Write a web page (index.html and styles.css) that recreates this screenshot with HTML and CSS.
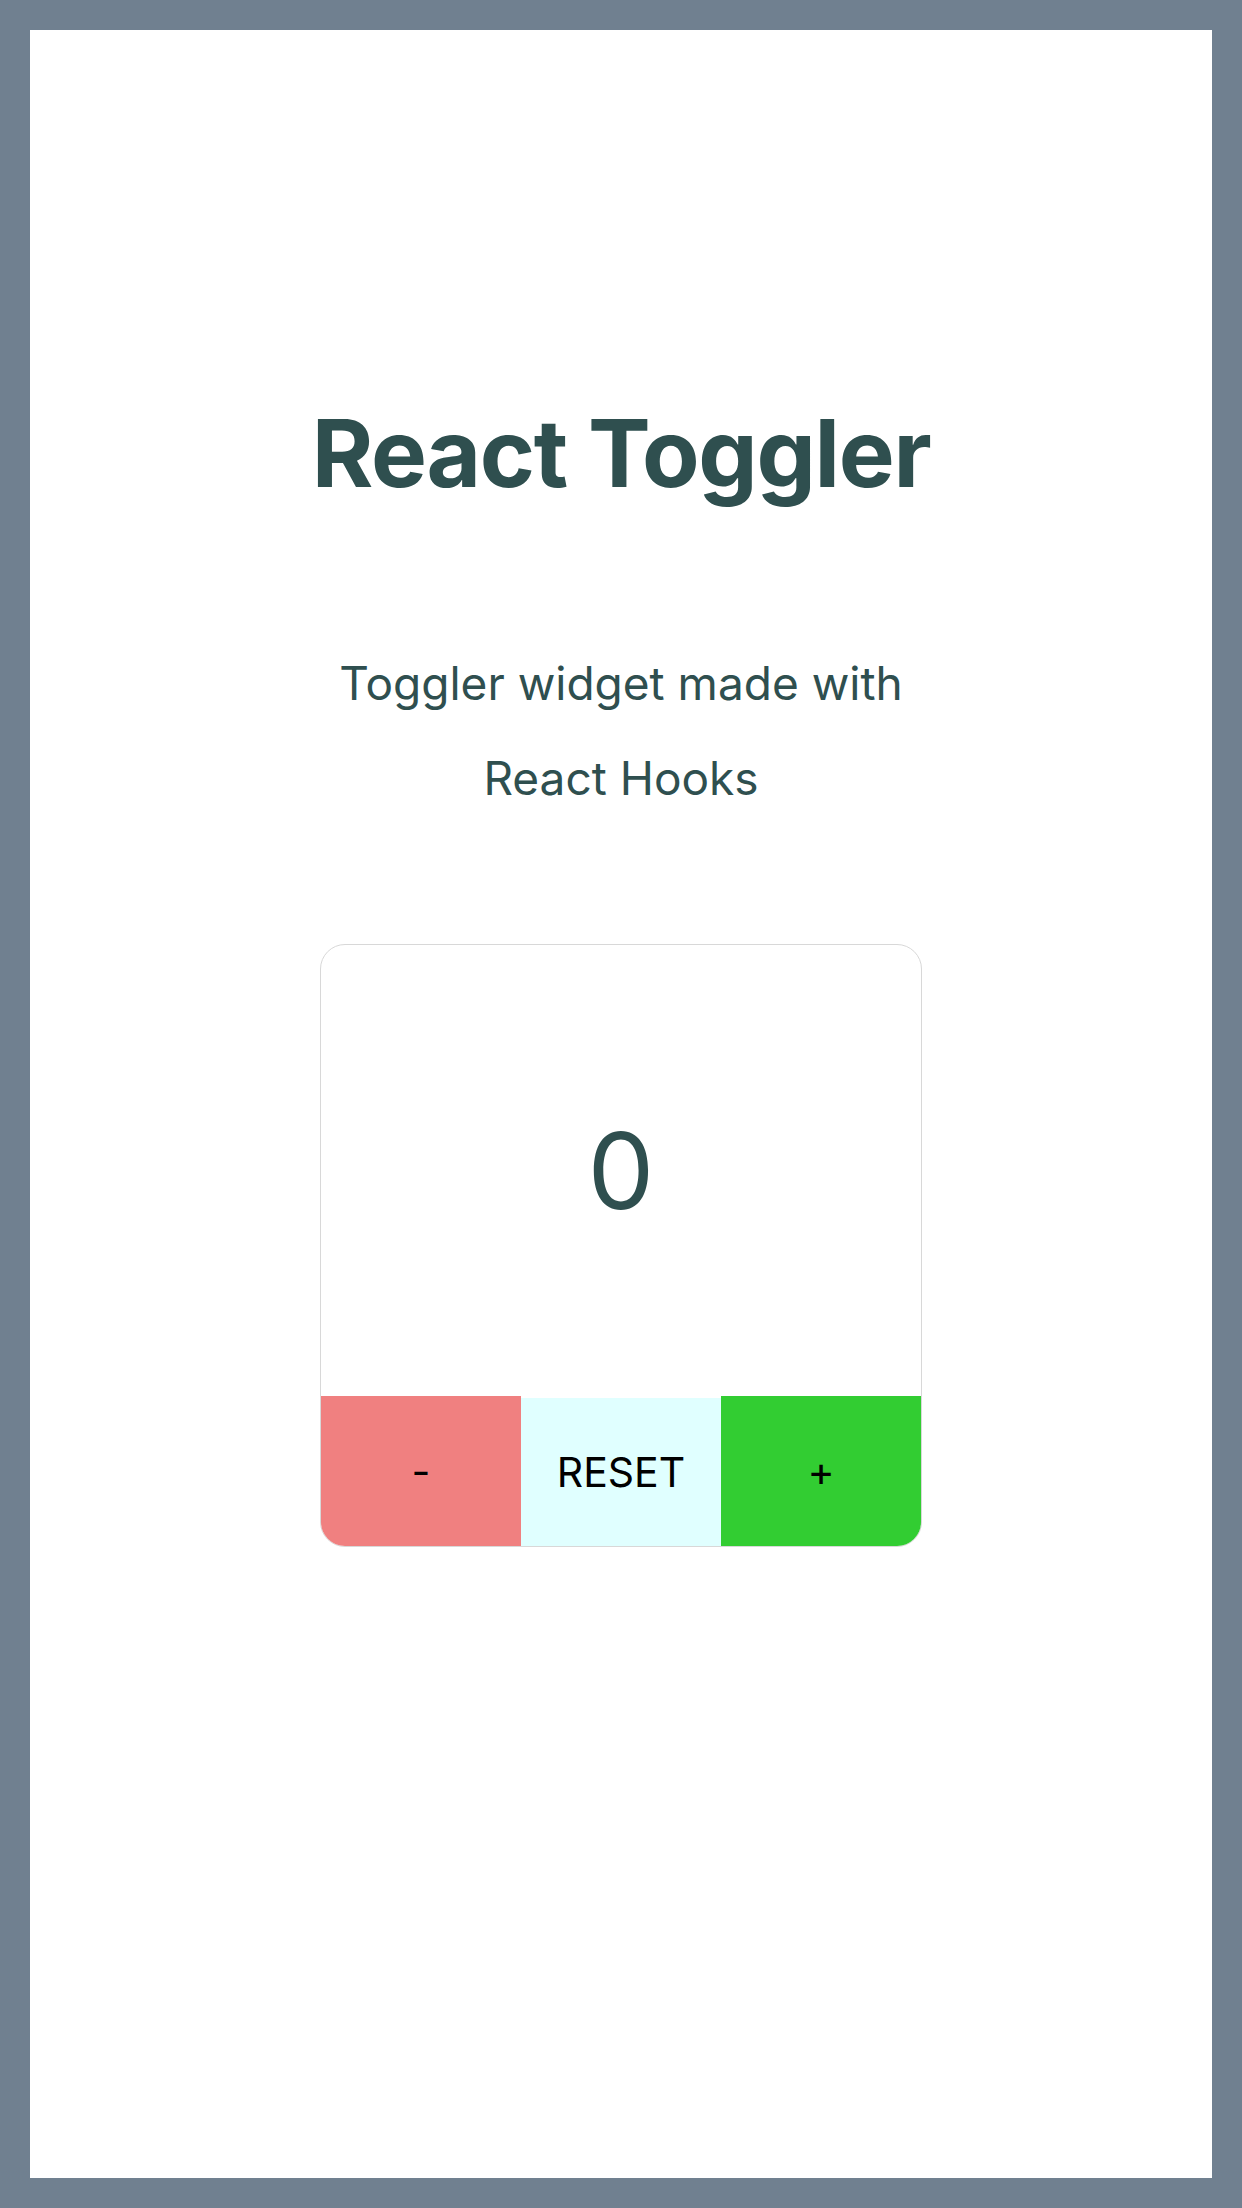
FILE: index.html
```html
<!DOCTYPE html>
<html lang="en">
<head>
<meta charset="utf-8">
<title>React Toggler</title>
<link rel="stylesheet" href="styles.css">
</head>
<body>
<main class="page">
  <h1 class="title">React Toggler</h1>
  <p class="subtitle">Toggler widget made with React Hooks</p>
  <section class="toggler">
    <div class="count">0</div>
    <div class="controls">
      <button class="btn btn-minus" type="button">-</button>
      <button class="btn btn-reset" type="button">RESET</button>
      <button class="btn btn-plus" type="button">+</button>
    </div>
  </section>
</main>
</body>
</html>
```

FILE: styles.css
```css
html, body {
  margin: 0;
  padding: 0;
}
body {
  width: 1242px;
  height: 2208px;
  box-sizing: border-box;
  border: 30px solid #708090;
  background: #ffffff;
  font-family: Inter, "Noto Sans", sans-serif;
  color: #2f4f4f;
}
.page {
  display: flex;
  flex-direction: column;
  align-items: center;
  padding-top: 366px;
}
.title {
  margin: 0;
  font-size: 94px;
  font-weight: 700;
  line-height: 114px;
  letter-spacing: -1.3px;
}
.subtitle {
  margin: 126px 0 118px;
  max-width: 600px;
  font-size: 46px;
  font-weight: 400;
  line-height: 95px;
  text-align: center;
}
.toggler {
  width: 600px;
  border: 1px solid #d8d8d8;
  border-radius: 25px;
  overflow: hidden;
  display: flex;
  flex-direction: column;
}
.count {
  height: 451px;
  display: flex;
  align-items: center;
  justify-content: center;
  font-size: 106px;
  font-weight: 400;
}
.controls {
  display: grid;
  grid-template-columns: 1fr 1fr 1fr;
  height: 150px;
}
.btn {
  border: none;
  margin: 0;
  padding: 0;
  font-family: Inter, "Noto Sans", sans-serif;
  font-size: 41px;
  color: #000000;
}
.btn-minus {
  background: #f08080;
}
.btn-reset {
  background: #e0ffff;
  border-top: 2px solid #ffffff;
}
.btn-plus {
  background: #32cd32;
}
```
